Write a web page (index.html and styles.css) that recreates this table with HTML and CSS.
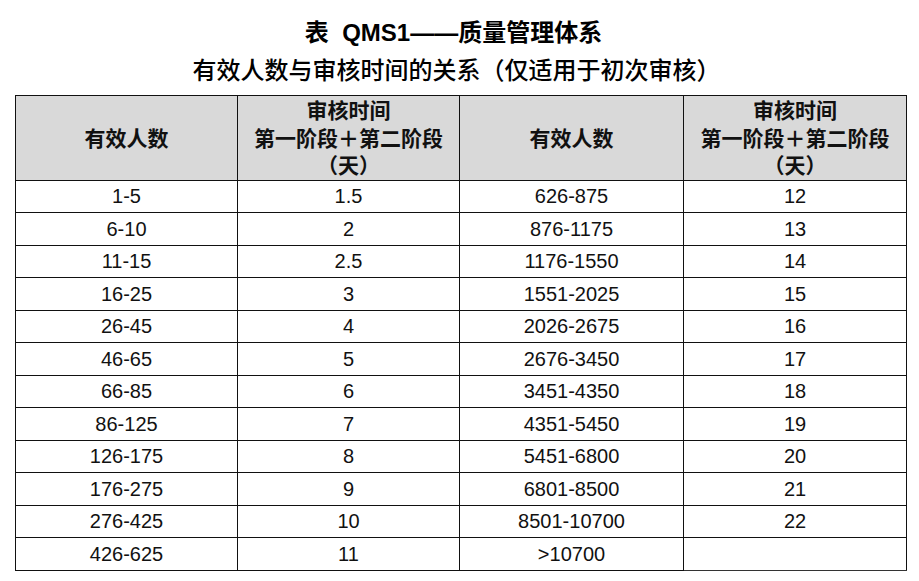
FILE: index.html
```html
<!DOCTYPE html>
<html lang="zh-CN">
<head>
<meta charset="utf-8">
<title>表 QMS1——质量管理体系</title>
<link rel="stylesheet" href="styles.css">
</head>
<body>
<div class="page">
  <div class="titles">
    <div class="title-main">表&nbsp; QMS1——质量管理体系</div>
    <div class="title-sub">有效人数与审核时间的关系（仅适用于初次审核）</div>
  </div>
  <table class="grid">
    <colgroup>
      <col class="c1"><col class="c2"><col class="c3"><col class="c4">
    </colgroup>
    <thead>
      <tr>
        <th>有效人数</th>
        <th>审核时间<br>第一阶段＋第二阶段<br>（天）</th>
        <th>有效人数</th>
        <th>审核时间<br>第一阶段＋第二阶段<br>（天）</th>
      </tr>
    </thead>
    <tbody>
      <tr><td>1-5</td><td>1.5</td><td>626-875</td><td>12</td></tr>
      <tr><td>6-10</td><td>2</td><td>876-1175</td><td>13</td></tr>
      <tr><td>11-15</td><td>2.5</td><td>1176-1550</td><td>14</td></tr>
      <tr><td>16-25</td><td>3</td><td>1551-2025</td><td>15</td></tr>
      <tr><td>26-45</td><td>4</td><td>2026-2675</td><td>16</td></tr>
      <tr><td>46-65</td><td>5</td><td>2676-3450</td><td>17</td></tr>
      <tr><td>66-85</td><td>6</td><td>3451-4350</td><td>18</td></tr>
      <tr><td>86-125</td><td>7</td><td>4351-5450</td><td>19</td></tr>
      <tr><td>126-175</td><td>8</td><td>5451-6800</td><td>20</td></tr>
      <tr><td>176-275</td><td>9</td><td>6801-8500</td><td>21</td></tr>
      <tr><td>276-425</td><td>10</td><td>8501-10700</td><td>22</td></tr>
      <tr><td>426-625</td><td>11</td><td>&gt;10700</td><td class="blank"></td></tr>
    </tbody>
  </table>
</div>
</body>
</html>
```

FILE: styles.css
```css
html, body {
  margin: 0;
  padding: 0;
  background: #ffffff;
}

body {
  font-family: "Liberation Sans", "Noto Sans CJK SC", sans-serif;
  color: #111111;
}

.page {
  width: 919px;
  height: 581px;
  overflow: hidden;
}

.titles {
  padding-top: 14px;
  text-align: center;
  color: #000000;
}

.title-main {
  font-size: 24px;
  font-weight: 700;
  line-height: 38px;
  padding-right: 12px;
}

.title-sub {
  font-size: 24px;
  font-weight: 500;
  line-height: 38px;
  padding-right: 6px;
}

.grid {
  margin: 5px 0 0 15px;
  width: 891px;
  border-collapse: collapse;
  table-layout: fixed;
}

.c1 { width: 222px; }
.c2 { width: 222px; }
.c3 { width: 224px; }
.c4 { width: 223px; }

.grid th,
.grid td {
  border: 1px solid #111111;
  text-align: center;
  padding: 0;
}

.grid th {
  background: #d9d9d9;
  font-size: 21px;
  font-weight: 700;
  line-height: 27.5px;
  height: 81px;
  padding-top: 1px;
  color: #111111;
}

.grid td {
  font-size: 20px;
  height: 31.5px;
  line-height: 20px;
}

.grid td.blank {
  border-bottom-color: #333333;
}
```
